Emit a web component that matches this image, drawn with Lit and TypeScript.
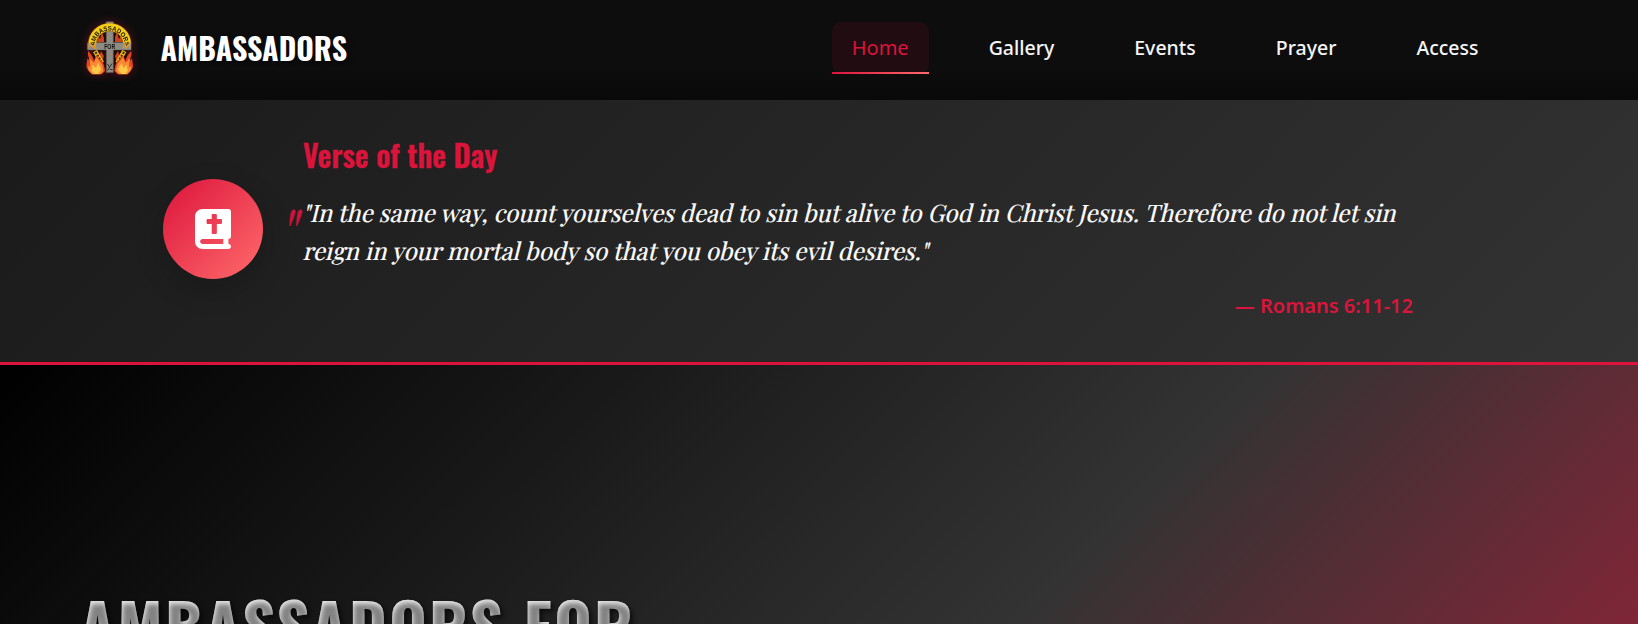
import { LitElement, html, css, svg } from "lit";

class AmbLogo extends LitElement {
  static styles = css`
    :host { display: block; width: 60px; height: 60px; filter: drop-shadow(0 0 5px rgba(220, 20, 60, 0.35)); }
    svg { display: block; }
    .ring { font: 700 6.6px "Liberation Sans", sans-serif; fill: #1b1703; }
    .arm { font: 700 6.8px "Liberation Sans", sans-serif; fill: #111; }
  `;
  render() {
    const flame = svg`
      <path fill="#e2481f" d="M8 31c2 2 4 4 5 7l1 3c1-2 1-4 3-6 1 3 3 5 5 6l2 4 1 6-3 3-2 .6H12l-3-3-2.400-4c-.6-4 .8-6 .8-9 1 1 2 2 2 3 0-3-1-5-1.400-6.600z"/>
      <path fill="#fb8c35" d="M9.500 38c2 2 3 4 5 5 0-3 1-4 2-6 2 4 5 5 6 9l1 5-3 3H12l-3.500-4-.5-4c1 0 2 1 2 2 .6-3 0-6-.5-10z"/>
      <path fill="#ffc94a" d="M12 45c2 1 3 2 4 3 1-2 1-4 2-5 1 3 3 4 3 7l-3 4h-4l-2.500-3.500 1-3z"/>`;
    return html`<svg width="60" height="60" viewBox="0 0 60 60">
      <path fill="#240a06" d="M13 24a16.700 15 0 0 1 33.400 0l1 16-8 8H20l-8-8z"/>
      <path fill="#c9431b" d="M17 22l1-6 2 3 2-7 2 6v4zM35 22v-5l2-5 2 7 2-3 2 6zM21 31l3 5-2 6-3-5zM38 31l-3 5 2 6 3-5z"/>
      <path d="M15 31l7 12M44.400 31l-7 12" stroke="#e3b41c" stroke-width="4.600"/>
      <path d="M15.500 32l6 10M44 32l-6 10" stroke="#33270a" stroke-width="2" stroke-dasharray="2 1.400"/>
      <path fill="#8f8c83" stroke="#5c5952" stroke-width=".6" d="M26.300 1.800h7V22.600h17.700v7.200H33.300v22.600h-7V29.800H7.600v-7.200h18.700z"/>
      <path d="M12.300 25.500V24a17.400 16.800 0 0 1 34.800 0v1.500" fill="none" stroke="#a87a0c" stroke-width="8.400"/>
      <path d="M12.300 25V24a17.400 16.800 0 0 1 34.800 0v1" fill="none" stroke="#f5cb1c" stroke-width="7.200"/>
      <path fill="#8f8c83" d="M7.600 23.400h43.400v6.400H7.600z"/>
      <path fill="#f5cb1c" d="M27 3.800h5.400v5H27z"/>
      ${flame}
      <g transform="translate(59.400 0) scale(-1 1)">${flame}</g>
      <path id="arch" d="M14.600 26A15.100 15.400 0 0 1 44.800 26" fill="none"/>
      <text class="ring" textLength="47.500" lengthAdjust="spacingAndGlyphs"><textPath href="#arch">AMBASSADORS</textPath></text>
      <text class="arm" x="29.700" y="28.600" text-anchor="middle" textLength="11" lengthAdjust="spacingAndGlyphs">FOR</text>
      <path d="M8.500 27l2-3 2 3 3-3-1 4 2 1M43 28l2-4 1 4 3-4 1 4" fill="none" stroke="#e59a25" stroke-width="1.300"/>
      <path d="M27.500 44l2 3M32 43.500l-4.500 7M30 49.500h2.500" fill="none" stroke="#2e2c28" stroke-width="1"/>
    </svg>`;
  }
}
customElements.define("amb-logo", AmbLogo);

class AppHeader extends LitElement {
  static styles = css`
    :host { display: block; }
    header { box-sizing: border-box; height: 100px; padding: 0 139.5px 0 80px; display: flex; align-items: center; justify-content: space-between;
      background: linear-gradient(#0d0d0d 68%, #090909); }
    .brand { display: flex; align-items: center; gap: 20.5px; }
    .name { margin-bottom: 5px; font: 700 30px/45px Oswald, sans-serif; color: #fff; text-shadow: 2px 2px 4px rgba(0,0,0,.5); }
    nav { display: flex; gap: 40px; }
    a { display: block; box-sizing: border-box; height: 52px; padding: 0 20px; color: #f5f5f5; font: 500 19.5px/51px "Noto Sans", sans-serif; border-radius: 10px; margin-top: -4px; }
    a.on { position: relative; background: rgba(220,20,60,.1); color: #dc143c; font-size: 20px; font-weight: 400; }
    a.on::after { content: ""; position: absolute; left: 0; right: 0; bottom: 0; height: 2px; background: linear-gradient(90deg, #dc143c, #ff6b6b); }
  `;
  render() {
    return html`<header>
      <div class="brand"><amb-logo></amb-logo><span class="name">AMBASSADORS</span></div>
      <nav>${["Home", "Gallery", "Events", "Prayer", "Access"].map((t, i) => html`<a class=${i ? "" : "on"}>${t}</a>`)}</nav>
    </header>`;
  }
}
customElements.define("app-header", AppHeader);

class VerseOfDay extends LitElement {
  static styles = css`
    :host { display: block; }
    section { box-sizing: border-box; height: 265px; padding: 0 163px; display: flex; align-items: center; gap: 40px;
      background: linear-gradient(135deg, #1a1a1a, #333); border-bottom: 3px solid #dc143c; }
    .icon { flex: none; width: 100px; height: 100px; border-radius: 50%; display: grid; place-items: center; margin-top: -4px;
      background: linear-gradient(135deg, #dc143c, #ff6b6b); box-shadow: 0 10px 30px rgba(0,0,0,.2); }
    .text { flex: none; width: 1110px; margin-top: -6px; }
    h2 { margin: 0 0 16px; font: 600 30px/45px Oswald, sans-serif; color: #dc143c; -webkit-text-stroke: .3px #dc143c; }
    .quote { position: relative; font: 400 24px/38px "Playfair Display", serif; color: #fff; -webkit-text-stroke: .25px currentColor; }
    .line { display: block; transform: skewX(-14deg); transform-origin: 0 27px; white-space: nowrap; }
    .mark { position: absolute; left: -20px; top: 5px; font-size: 62px; line-height: 64px; color: #dc143c; transform: skewX(-14deg); opacity: .9; }
    .ref { margin-top: 18px; text-align: right; font: 600 20px/38px "Noto Sans", sans-serif; color: #dc143c; }
  `;
  render() {
    return html`<section>
      <div class="icon"><svg width="36" height="40" viewBox="0 0 448 512" preserveAspectRatio="none"><path fill="#fff" d="M96 0C43 0 0 43 0 96V416c0 53 43 96 96 96H384h32c17.700 0 32-14.300 32-32s-14.300-32-32-32V384c17.700 0 32-14.300 32-32V32c0-17.700-14.300-32-32-32H384 96zm0 384H352v64H96c-17.700 0-32-14.300-32-32s14.300-32 32-32zM208 80c0-8.800 7.200-16 16-16h32c8.800 0 16 7.200 16 16v48h48c8.800 0 16 7.200 16 16v32c0 8.800-7.200 16-16 16H272V304c0 8.800-7.200 16-16 16H224c-8.800 0-16-7.200-16-16V192H160c-8.800 0-16-7.200-16-16V144c0-8.800 7.200-16 16-16h48V80z"/></svg></div>
      <div class="text">
        <h2>Verse of the Day</h2>
        <div class="quote"><span class="mark">"</span>
          <span class="line">"In the same way, count yourselves dead to sin but alive to God in Christ Jesus. Therefore do not let sin</span>
          <span class="line">reign in your mortal body so that you obey its evil desires."</span>
        </div>
        <div class="ref">— Romans 6:11-12</div>
      </div>
    </section>`;
  }
}
customElements.define("verse-of-day", VerseOfDay);

class AppHero extends LitElement {
  static styles = css`
    :host { display: block; height: 259px; overflow: hidden; }
    section { box-sizing: border-box; height: 912px; padding: 219.500px 0 0 79.500px; background: linear-gradient(135deg, #000, #333 50%, #d0183c); }
    h1 { margin: 0; width: 640px; font: 700 64.900px/78px Oswald, sans-serif; letter-spacing: 2px; color: #838383; filter: url(#bevel); }
    .defs { display: block; width: 0; height: 0; }
  `;
  render() {
    return html`<section>
      <svg class="defs"><filter id="bevel" x="-5%" y="-10%" width="110%" height="125%" color-interpolation-filters="sRGB">
        <feOffset in="SourceAlpha" dx="1" dy="2.500" result="o"/>
        <feGaussianBlur in="o" stdDeviation="2.800" result="b"/>
        <feComposite in="SourceAlpha" in2="b" operator="out" result="edge"/>
        <feFlood flood-color="#fff" flood-opacity=".82"/>
        <feComposite in2="edge" operator="in" result="hi"/>
        <feDropShadow in="SourceGraphic" dx="3" dy="3" stdDeviation="2.500" flood-color="#000" flood-opacity=".6" result="base"/>
        <feMerge><feMergeNode in="base"/><feMergeNode in="hi"/></feMerge>
      </filter></svg>
      <h1>AMBASSADORS FOR</h1>
    </section>`;
  }
}
customElements.define("app-hero", AppHero);

class AppRoot extends LitElement {
  static styles = css`:host { display: block; height: 624px; overflow: hidden; background: #000; }`;
  render() {
    return html`<app-header></app-header><verse-of-day></verse-of-day><app-hero></app-hero>`;
  }
}
customElements.define("app-root", AppRoot);
